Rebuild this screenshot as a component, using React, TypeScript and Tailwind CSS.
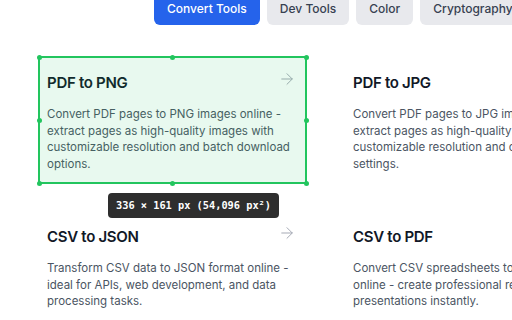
import { ArrowRight } from "lucide-react";

const tabs = ["Convert Tools", "Dev Tools", "Color", "Cryptography"];

const cards = [
  {
    title: "PDF to PNG",
    desc: "Convert PDF pages to PNG images online - extract pages as high-quality images with customizable resolution and batch download options.",
  },
  {
    title: "PDF to JPG",
    desc: "Convert PDF pages to JPG images online - extract pages as high-quality JPG images, customizable resolution and compression settings.",
  },
  {
    title: "CSV to JSON",
    desc: "Transform CSV data to JSON format online - ideal for APIs, web development, and data processing tasks.",
  },
  {
    title: "CSV to PDF",
    desc: "Convert CSV spreadsheets to PDF format online - create professional reports and presentations instantly.",
  },
];

const Handle = ({ className }: { className: string }) => (
  <span className={`absolute w-[5px] h-[5px] rounded-full bg-[#22c55e] ${className}`} />
);

const InspectOverlay = () => (
  <div className="absolute inset-0 border-2 border-[#22c55e] bg-[#22c55e]/10">
    <Handle className="-left-[3.5px] -top-[3.5px]" />
    <Handle className="left-1/2 -ml-[2.5px] -top-[3.5px]" />
    <Handle className="-right-[3.5px] -top-[3.5px]" />
    <Handle className="-left-[3.5px] top-1/2 -mt-[2.5px]" />
    <Handle className="-right-[3.5px] top-1/2 -mt-[2.5px]" />
    <Handle className="-left-[3.5px] -bottom-[3.5px]" />
    <Handle className="left-1/2 -ml-[2.5px] -bottom-[3.5px]" />
    <Handle className="-right-[3.5px] -bottom-[3.5px]" />
    <div className="absolute left-[68px] top-[135px] h-[25px] px-[8px] flex items-center rounded-[4px] bg-[#2e2e2e] text-white text-[10.3px] font-bold font-['DejaVu_Sans_Mono',monospace] whitespace-nowrap">
      336 × 161 px (54,096 px²)
    </div>
  </div>
);

export default function App() {
  return (
    <div className="w-[512px] h-[320px] overflow-hidden bg-white font-['Inter',sans-serif]">
      <div className="flex gap-[7px] pl-[154px] mt-[-11px]">
        {tabs.map((t, i) => (
          <button
            key={t}
            className={`shrink-0 h-[36px] px-[13px] pb-[8px] flex items-end rounded-[6px] text-[12px] leading-[16px] font-medium whitespace-nowrap ${
              i === 0 ? "bg-[#2563eb] text-white" : "bg-[#e8e9ed] text-[#374151]"
            }`}
          >
            {t}
          </button>
        ))}
      </div>

      <div className="grid grid-cols-[269px_269px] gap-x-[37px] gap-y-[26px] pl-[38px] mt-[31px] w-[700px]">
        {cards.map((c, i) => (
          <div key={c.title} className="relative pt-[15px] pb-[12px] pl-[9px] pr-[11px]">
            <div className="flex items-start justify-between">
              <h3 className="text-[15px] leading-[24px] font-semibold tracking-[-0.02em] text-[#111827] whitespace-nowrap">
                {c.title}
              </h3>
              <ArrowRight className="w-[18px] h-[18px] text-[#a3a8b3] -mt-[1px]" strokeWidth={1.3} />
            </div>
            <p className="mt-[11px] text-[11.5px] leading-[16.5px] text-[#4b5563] w-[250px]">
              {c.desc}
            </p>
            {i === 0 && <InspectOverlay />}
          </div>
        ))}
      </div>
    </div>
  );
}
